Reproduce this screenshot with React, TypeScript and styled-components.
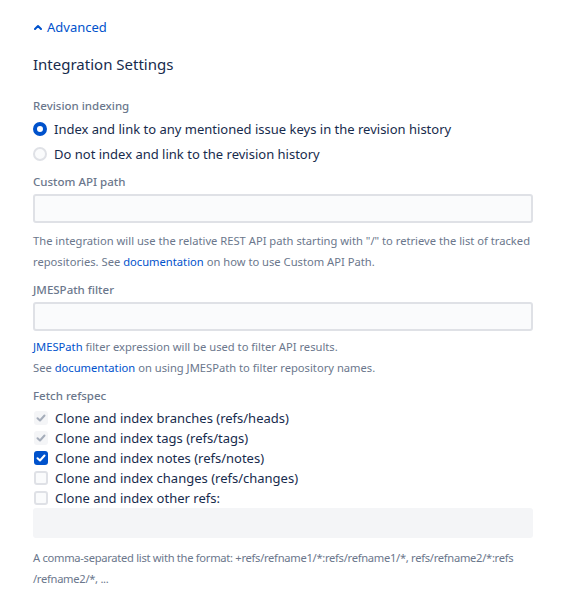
import React from "react";
import styled, { createGlobalStyle } from "styled-components";

const GlobalStyle = createGlobalStyle`
  html, body {
    margin: 0;
    padding: 0;
    background: #ffffff;
  }
  body {
    font-family: "Noto Sans", "Open Sans", sans-serif;
    color: #172b4d;
  }
`;

const Page = styled.div`
  padding: 17px 29px 0 33px;
  width: 500px;
`;

const Toggle = styled.a`
  display: flex;
  width: fit-content;
  align-items: center;
  gap: 5px;
  padding-left: 1px;
  font-size: 13px;
  line-height: 20px;
  color: #0052cc;
  text-decoration: none;
  cursor: pointer;
`;

const Heading = styled.h3`
  margin: 15px 0 0;
  font-size: 15px;
  font-weight: 400;
  line-height: 24px;
  color: #172b4d;
`;

const Label = styled.div<{ $top: number }>`
  margin-top: ${(p) => p.$top}px;
  font-size: 11.5px;
  font-weight: 500;
  line-height: 16px;
  color: #6b778c;
`;

const OptionList = styled.div<{ $row: number; $top: number }>`
  display: flex;
  flex-direction: column;
  margin-top: ${(p) => p.$top}px;
  & > label {
    height: ${(p) => p.$row}px;
  }
`;

const Option = styled.label`
  display: flex;
  align-items: center;
  gap: 7px;
  font-size: 13px;
  color: #172b4d;
  cursor: pointer;
`;

const Radio = styled.span<{ $checked?: boolean }>`
  box-sizing: border-box;
  width: 14px;
  height: 14px;
  border-radius: 50%;
  flex: none;
  background: ${(p) => (p.$checked ? "#ffffff" : "#fafbfc")};
  border: ${(p) => (p.$checked ? "4px solid #0052cc" : "2px solid #dfe1e6")};
`;

type BoxState = "off" | "on" | "locked";

const Box = styled.span<{ $state: BoxState }>`
  box-sizing: border-box;
  width: 14px;
  height: 14px;
  margin-left: 1px;
  border-radius: 3px;
  flex: none;
  display: flex;
  align-items: center;
  justify-content: center;
  background: ${(p) =>
    p.$state === "on" ? "#0052cc" : p.$state === "locked" ? "#f4f5f7" : "#fafbfc"};
  border: ${(p) => (p.$state === "off" ? "2px solid #dfe1e6" : "none")};
`;

const Input = styled.input<{ $top: number }>`
  display: block;
  box-sizing: border-box;
  width: 100%;
  height: 29px;
  margin-top: ${(p) => p.$top}px;
  padding: 0 6px;
  border: 2px solid #dfe1e6;
  border-radius: 3px;
  background: #fafbfc;
  font: inherit;
  font-size: 13px;
  outline: none;
  &:disabled {
    height: 30px;
    border-color: #f4f5f7;
    background: #f4f5f7;
  }
`;

const Help = styled.p<{ $top: number; $tight?: boolean }>`
  margin: ${(p) => p.$top}px 0 0;
  font-size: 11.2px;
  line-height: 20.5px;
  color: #6b778c;
  letter-spacing: ${(p) => (p.$tight ? "-0.3px" : "normal")};
  white-space: ${(p) => (p.$tight ? "nowrap" : "normal")};
`;

const Link = styled.a`
  color: #0052cc;
  text-decoration: none;
`;

const Chevron = () => (
  <svg width="8" height="6" viewBox="0 0 8 6">
    <path d="M1 5 L4 2 L7 5" fill="none" stroke="#0052cc" strokeWidth="2" strokeLinecap="round" strokeLinejoin="round" />
  </svg>
);

const Tick = ({ color }: { color: string }) => (
  <svg width="10" height="8" viewBox="0 0 10 8">
    <path d="M1.5 4.2 L4 6.5 L8.5 1.5" fill="none" stroke={color} strokeWidth="2" strokeLinecap="round" strokeLinejoin="round" />
  </svg>
);

const refspecs: { text: string; state: BoxState }[] = [
  { text: "Clone and index branches (refs/heads)", state: "locked" },
  { text: "Clone and index tags (refs/tags)", state: "locked" },
  { text: "Clone and index notes (refs/notes)", state: "on" },
  { text: "Clone and index changes (refs/changes)", state: "off" },
  { text: "Clone and index other refs:", state: "off" },
];

export default function App() {
  return (
    <Page>
      <GlobalStyle />
      <Toggle>
        <Chevron />
        Advanced
      </Toggle>
      <Heading>Integration Settings</Heading>

      <Label $top={22}>Revision indexing</Label>
      <OptionList $row={25} $top={2}>
        <Option>
          <Radio $checked />
          Index and link to any mentioned issue keys in the revision history
        </Option>
        <Option>
          <Radio />
          Do not index and link to the revision history
        </Option>
      </OptionList>

      <Label $top={8}>Custom API path</Label>
      <Input $top={4} />
      <Help $top={8}>
        The integration will use the relative REST API path starting with "/" to retrieve the list of tracked
        repositories. See <Link>documentation</Link> on how to use Custom API Path.
      </Help>

      <Label $top={10}>JMESPath filter</Label>
      <Input $top={4} />
      <Help $top={6}>
        <Link>JMESPath</Link> filter expression will be used to filter API results.
        <br />
        See <Link>documentation</Link> on using JMESPath to filter repository names.
      </Help>

      <Label $top={10}>Fetch refspec</Label>
      <OptionList $row={20} $top={4}>
        {refspecs.map((r) => (
          <Option key={r.text}>
            <Box $state={r.state}>
              {r.state === "on" && <Tick color="#ffffff" />}
              {r.state === "locked" && <Tick color="#a5adba" />}
            </Box>
            {r.text}
          </Option>
        ))}
      </OptionList>
      <Input $top={0} disabled />
      <Help $top={10} $tight>
        A comma-separated list with the format: +refs/refname1/*:refs/refname1/*, refs/refname2/*:refs
        <br />
        /refname2/*, ...
      </Help>
    </Page>
  );
}
